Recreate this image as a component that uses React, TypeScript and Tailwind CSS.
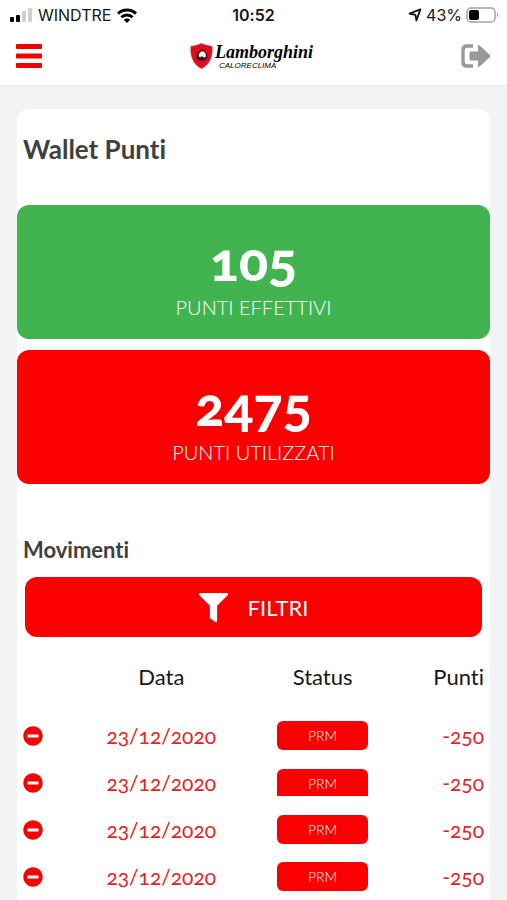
import React from 'react';
import { FaFilter, FaMinusCircle } from 'react-icons/fa';

type Movement = {
  id: number;
  date: string;
  status: string;
  points: number;
  flat?: boolean;
};

const movements: Movement[] = [
  { id: 1, date: '23/12/2020', status: 'PRM', points: -250 },
  { id: 2, date: '23/12/2020', status: 'PRM', points: -250, flat: true },
  { id: 3, date: '23/12/2020', status: 'PRM', points: -250 },
  { id: 4, date: '23/12/2020', status: 'PRM', points: -250 },
];

function StatusBar() {
  return (
    <div className="grid h-[30px] grid-cols-3 items-center px-2 font-['Inter',sans-serif] text-base leading-5 text-neutral-900">
      <div className="flex items-center gap-1.5">
        <svg width="24" height="16" viewBox="0 0 24 16" aria-hidden="true">
          <rect x="2" y="10" width="4" height="5" rx="1" fill="#000" />
          <rect x="8" y="8" width="4" height="7" rx="1" fill="#000" />
          <rect x="14" y="4" width="4" height="11" rx="1" fill="#d0d0d0" />
          <rect x="20" y="1" width="4" height="14" rx="1" fill="#d0d0d0" />
        </svg>
        <span>WINDTRE</span>
        <svg width="20" height="15" viewBox="0 0 20 15" fill="none" stroke="#000" strokeWidth="3" aria-hidden="true">
          <path d="M1 5.6a12.8 12.8 0 0 1 18 0" />
          <path d="M4.4 9.2a8 8 0 0 1 11.2 0" />
          <path d="M10 15 6.8 11.8a4.6 4.6 0 0 1 6.4 0z" fill="#000" stroke="none" />
        </svg>
      </div>
      <div className="text-center font-semibold">10:52</div>
      <div className="flex items-center justify-end gap-1">
        <svg width="14" height="14" viewBox="0 0 14 14" fill="none" stroke="#111" strokeWidth="1.8" strokeLinejoin="round" aria-hidden="true">
          <path d="M1.5 5.6 12.4 1.4 8.4 12.4 7.4 6.8z" />
        </svg>
        <span>43%</span>
        <svg width="33" height="17" viewBox="0 0 33 17" aria-hidden="true">
          <rect x="1" y="1" width="28" height="14" rx="4" fill="none" stroke="#a3a3a3" strokeWidth="1.5" />
          <rect x="3" y="3" width="10" height="10" rx="2" fill="#000" />
          <path d="M31 6v4c1.6-.5 1.6-3.500 0-4z" fill="#999" />
        </svg>
      </div>
    </div>
  );
}

function Logo() {
  return (
    <a href="#" aria-label="Lamborghini Caloreclima" className="flex items-center gap-0.5">
      <svg width="23" height="28" viewBox="0 0 24 28" aria-hidden="true">
        <path d="M1 4C5 3.500 9 2.500 12 1c3 1.500 7 2.500 11 3 .6 10-2 18.500-11 23C3 22.500.4 14 1 4z" fill="#e30920" stroke="#b5323c" strokeWidth="0.8" />
        <path d="M12 5.500l1.200 2.500c3 1 5 3.500 4.800 7l-1 2.500H7c-.8-4 .5-7.500 4.200-9.500z" fill="#2a1616" />
        <path d="M9 14c0-3 2-5.500 4.500-5 2.500 1 3.500 3.500 3 6l-2.500.5-1.500-1.500-2 1.500z" fill="#f6eeee" />
        <path d="M8.500 18l2-1 1.500 1.500 2-1.500 1.500 1.500" fill="none" stroke="#2a1616" strokeWidth="1.5" />
      </svg>
      <span className="flex flex-col text-black italic">
        <span className="font-['Liberation_Serif',serif] text-lg leading-5 font-bold">Lamborghini</span>
        <span className="pl-1 font-['Liberation_Sans',sans-serif] text-[8px] leading-[8px]">CALORECLIMA</span>
      </span>
    </a>
  );
}

function Header() {
  return (
    <header className="border-b border-gray-200 bg-white">
      <StatusBar />
      <div className="flex h-[55px] items-center justify-between px-4 pb-1">
        <button type="button" aria-label="Menu">
          <svg width="26" height="24" viewBox="0 0 26 24" fill="#f00000" aria-hidden="true">
            <rect y="0" width="26" height="5" rx="1" />
            <rect y="9.500" width="26" height="5" rx="1" />
            <rect y="19" width="26" height="5" rx="1" />
          </svg>
        </button>
        <Logo />
        <button type="button" aria-label="Esci">
          <svg width="30" height="24" viewBox="0 0 30 24" aria-hidden="true">
            <path d="M12 2H6Q2 2 2 6v12q0 4 4 4h6" fill="none" stroke="#999" strokeWidth="3.500" />
            <path d="M8.500 8.500q0-1 1-1H17V2q0-2 1.600-.6L29 11q1 1 0 2L18.600 22.600Q17 24 17 22v-5.500H9.500q-1 0-1-1z" fill="#999" />
          </svg>
        </button>
      </div>
    </header>
  );
}

type PointsProps = {
  value: number;
  label: string;
  className: string;
};

function PointsCard({ value, label, className }: PointsProps) {
  return (
    <div className={`flex h-[134px] flex-col items-center gap-1 rounded-xl pt-7 text-white ${className}`}>
      <p className="text-[54px] leading-[56px] font-black">{value}</p>
      <p className="text-xl leading-7 font-light">{label}</p>
    </div>
  );
}

function MovementsTable() {
  return (
    <table className="mt-[15px] w-full table-fixed text-[21px]">
      <thead>
        <tr className="h-12 text-[22px] text-neutral-900">
          <th className="w-[12.5%]" aria-label="Tipo" />
          <th className="w-[35%] font-normal">Data</th>
          <th className="w-[35%] font-normal">Status</th>
          <th className="w-[17.5%] text-right font-normal">Punti</th>
        </tr>
      </thead>
      <tbody>
        <tr className="h-3" aria-hidden="true" />
        {movements.map((m) => (
          <tr key={m.id} className="h-[47px] text-[#e42424]">
            <td>
              <FaMinusCircle size={20} color="#fa0000" />
            </td>
            <td className="text-center">{m.date}</td>
            <td>
              <span
                className={`mx-auto block w-[91px] bg-[#fa0000] text-center text-sm leading-[29px] font-light text-white ${m.flat ? 'h-[27px] rounded-t-md' : 'h-[29px] rounded-md'}`}
              >
                {m.status}
              </span>
            </td>
            <td className="text-right">{m.points}</td>
          </tr>
        ))}
      </tbody>
    </table>
  );
}

export default function App() {
  return (
    <div className="flex min-h-screen flex-col bg-[#f2f4f4] font-['Lato',sans-serif] oldstyle-nums [font-variant-ligatures:none]">
      <Header />
      <main className="flex flex-1 flex-col px-[17px] pt-[23px]">
        <section className="flex-1 rounded-t-xl bg-white">
          <h1 className="px-1.5 pt-6 text-[26px] leading-8 font-bold text-neutral-700">Wallet Punti</h1>
          <div className="mt-10 flex flex-col gap-[11px]">
            <PointsCard value={105} label="PUNTI EFFETTIVI" className="bg-[#41b44f]" />
            <PointsCard value={2475} label="PUNTI UTILIZZATI" className="bg-[#fa0000]" />
          </div>
          <div className="px-1.5 pt-[52px]">
            <h2 className="text-[22px] leading-7 font-bold text-neutral-700">Movimenti</h2>
            <div className="px-0.5 pt-[13px]">
              <button
                type="button"
                className="flex h-[60px] w-full items-center justify-center gap-5 rounded-xl bg-[#fa0000] text-[22px] text-white"
              >
                <FaFilter size={29} />
                FILTRI
              </button>
            </div>
            <MovementsTable />
          </div>
        </section>
      </main>
    </div>
  );
}
